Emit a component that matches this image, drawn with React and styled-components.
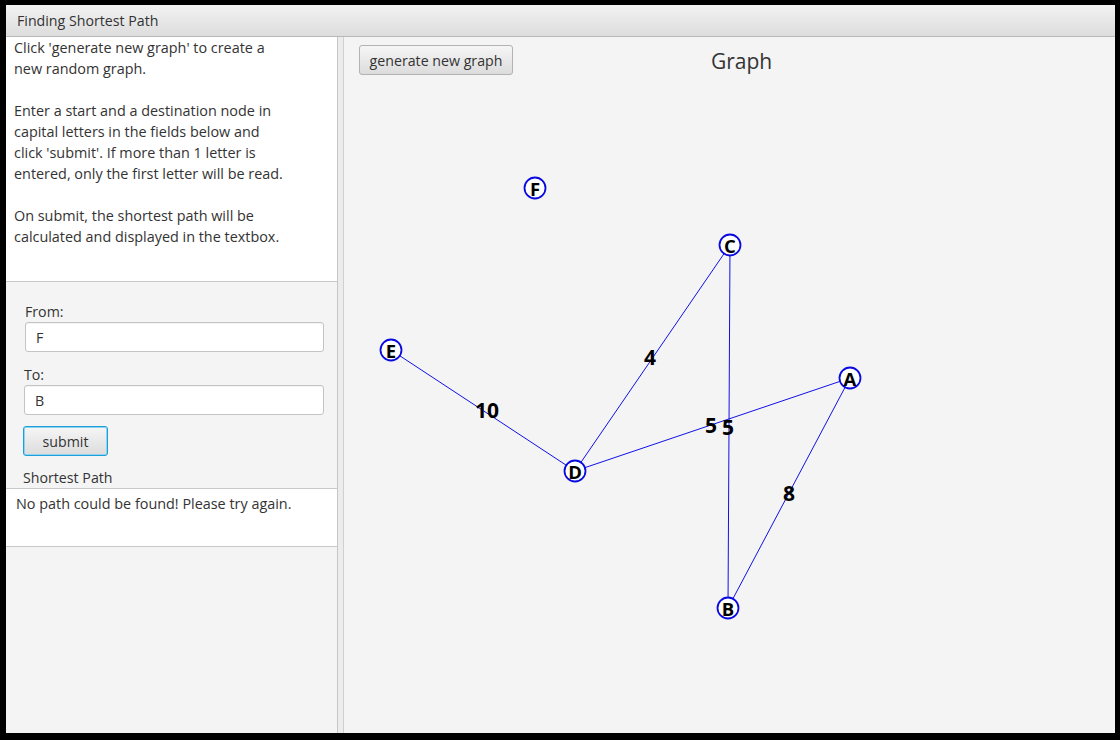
import React from 'react'
import styled, { createGlobalStyle } from 'styled-components'

const GlobalStyle = createGlobalStyle`
    html, body {
        margin: 0;
        padding: 0;
        background: #000;
    }
    body {
        width: 1120px;
        height: 740px;
        overflow: hidden;
        font-family: "Open Sans", "Noto Sans", sans-serif;
        color: #333;
    }
`

// graph data, in page coordinates; the canvas origin is subtracted below
const ORIGIN = { x: 344, y: 75 }

const nodes = [
    { id: 'F', x: 535, y: 188 },
    { id: 'C', x: 730, y: 245 },
    { id: 'E', x: 391, y: 350 },
    { id: 'A', x: 850, y: 378 },
    { id: 'D', x: 575, y: 471 },
    { id: 'B', x: 728, y: 608 },
]

const edges = [
    { from: 'E', to: 'D', weight: 10, lx: 487, ly: 410 },
    { from: 'D', to: 'C', weight: 4, lx: 650, ly: 357 },
    { from: 'D', to: 'A', weight: 5, lx: 711, ly: 425 },
    { from: 'C', to: 'B', weight: 5, lx: 728, ly: 427 },
    { from: 'A', to: 'B', weight: 8, lx: 789, ly: 493 },
]

const byId = Object.fromEntries(nodes.map((n) => [n.id, n]))

const App = () => {
    return (
        <Screen>
            <GlobalStyle />
            <Window>
                <TitleBar>Finding Shortest Path</TitleBar>
                <Body>
                    <LeftPane>
                        <Instructions>
                            <p>Click 'generate new graph' to create a<br />new random graph.</p>
                            <p>Enter a start and a destination node in<br />capital letters in the fields below and<br />click 'submit'. If more than 1 letter is<br />entered, only the first letter will be read.</p>
                            <p>On submit, the shortest path will be<br />calculated and displayed in the textbox.</p>
                        </Instructions>
                        <Form>
                            <FieldLabel $left={19}>From:</FieldLabel>
                            <Field defaultValue="F" $left={19} />
                            <FieldLabel $top={13} $left={18}>To:</FieldLabel>
                            <Field defaultValue="B" $left={18} />
                            <Button $focused $width={85}>submit</Button>
                            <FieldLabel $top={12} $left={17}>Shortest Path</FieldLabel>
                        </Form>
                        <Result>No path could be found! Please try again.</Result>
                    </LeftPane>
                    <Divider />
                    <GraphPane>
                        <GraphHeader>
                            <Button $width={154}>generate new graph</Button>
                            <GraphTitle>Graph</GraphTitle>
                        </GraphHeader>
                        <Canvas>
                            <svg width="100%" height="100%">
                                {edges.map((e) => {
                                    const a = byId[e.from]
                                    const b = byId[e.to]
                                    return (
                                        <line
                                            key={e.from + e.to}
                                            x1={a.x - ORIGIN.x}
                                            y1={a.y - ORIGIN.y}
                                            x2={b.x - ORIGIN.x}
                                            y2={b.y - ORIGIN.y}
                                            stroke="#1010e8"
                                            strokeWidth="1"
                                        />
                                    )
                                })}
                                {edges.map((e) => (
                                    <WeightText
                                        key={'w' + e.from + e.to}
                                        x={e.lx - ORIGIN.x}
                                        y={e.ly - ORIGIN.y}
                                        textAnchor="middle"
                                        dominantBaseline="central"
                                    >
                                        {e.weight}
                                    </WeightText>
                                ))}
                                {nodes.map((n) => (
                                    <g key={n.id}>
                                        <circle
                                            cx={n.x - ORIGIN.x}
                                            cy={n.y - ORIGIN.y}
                                            r="10.5"
                                            fill="#ffffff"
                                            stroke="#0a0ae0"
                                            strokeWidth="1.8"
                                        />
                                        <NodeText
                                            x={n.x - ORIGIN.x}
                                            y={n.y - ORIGIN.y}
                                            textAnchor="middle"
                                            dominantBaseline="central"
                                        >
                                            {n.id}
                                        </NodeText>
                                    </g>
                                ))}
                            </svg>
                        </Canvas>
                    </GraphPane>
                </Body>
            </Window>
        </Screen>
    )
}

export default App

const Screen = styled.div`
    box-sizing: border-box;
    width: 1120px;
    height: 740px;
    padding: 5px 5px 7px 6px;
    background: #000;
`

const Window = styled.div`
    display: flex;
    flex-direction: column;
    height: 100%;
    background: #f4f4f4;
`

const TitleBar = styled.div`
    box-sizing: border-box;
    height: 32px;
    padding-left: 11px;
    display: flex;
    align-items: center;
    font-size: 14.2px;
    color: #333;
    background: linear-gradient(#f2f2f2, #dddddd);
    border-bottom: 1px solid #b9b9b9;
`

const Body = styled.div`
    flex: 1;
    display: flex;
    min-height: 0;
`

const LeftPane = styled.div`
    width: 331px;
    display: flex;
    flex-direction: column;
    background: #f4f4f4;
    border-right: 1px solid #c6c6c6;
`

const Instructions = styled.div`
    box-sizing: border-box;
    height: 245px;
    padding: 0 8px;
    background: #fff;
    border-bottom: 1px solid #c8c8c8;
    font-size: 14.4px;
    line-height: 21px;
    color: #333;

    p {
        margin: 0 0 21px;
    }
`

const Form = styled.div`
    display: flex;
    flex-direction: column;
    align-items: flex-start;
    padding: 20px 0 0;
`

const FieldLabel = styled.label`
    margin: ${(p) => p.$top || 0}px 0 0 ${(p) => p.$left}px;
    font-size: 14.2px;
    line-height: 20px;
    color: #333;
`

const Field = styled.input`
    box-sizing: border-box;
    width: ${(p) => 318 - p.$left}px;
    height: 30px;
    margin-left: ${(p) => p.$left}px;
    padding: 0 10px;
    font-family: inherit;
    font-size: 14.2px;
    color: #333;
    background: #fff;
    border: 1px solid #c4c4c4;
    border-radius: 3px;
    box-shadow: inset 0 1px 1px rgba(0, 0, 0, 0.05);
    outline: none;
`

const Button = styled.button`
    box-sizing: border-box;
    width: ${(p) => p.$width}px;
    height: 30px;
    margin: ${(p) => (p.$focused ? '11px 0 0 17px' : '0')};
    padding: 0;
    font-family: inherit;
    font-size: 14.2px;
    color: #333;
    background: linear-gradient(#f6f6f6, #dcdcdc);
    border: 1px solid ${(p) => (p.$focused ? '#1a9fd8' : '#b3b3b3')};
    border-radius: 3px;
    box-shadow: ${(p) => (p.$focused ? 'inset 0 0 0 1px #8fd3f0' : 'none')};
`

const Result = styled.div`
    box-sizing: border-box;
    height: 59px;
    padding: 4px 10px;
    background: #fff;
    border-top: 1px solid #c8c8c8;
    border-bottom: 1px solid #c8c8c8;
    font-size: 14.4px;
    line-height: 21px;
    color: #333;
`

const Divider = styled.div`
    width: 5px;
    background: #ececec;
    border-right: 1px solid #d0d0d0;
`

const GraphPane = styled.div`
    flex: 1;
    display: flex;
    flex-direction: column;
    background: #f4f4f4;
`

const GraphHeader = styled.div`
    display: flex;
    align-items: center;
    padding: 8px 0 0 15px;
`

const GraphTitle = styled.div`
    margin: 2px 0 0 198px;
    font-size: 21px;
    color: #333;
`

const Canvas = styled.div`
    flex: 1;
`

const WeightText = styled.text`
    font-family: "Open Sans", "Noto Sans", sans-serif;
    font-weight: 700;
    font-size: 21px;
    fill: #000;
`

const NodeText = styled.text`
    font-family: "Open Sans", "Noto Sans", sans-serif;
    font-weight: 700;
    font-size: 18.5px;
    fill: #000;
`
